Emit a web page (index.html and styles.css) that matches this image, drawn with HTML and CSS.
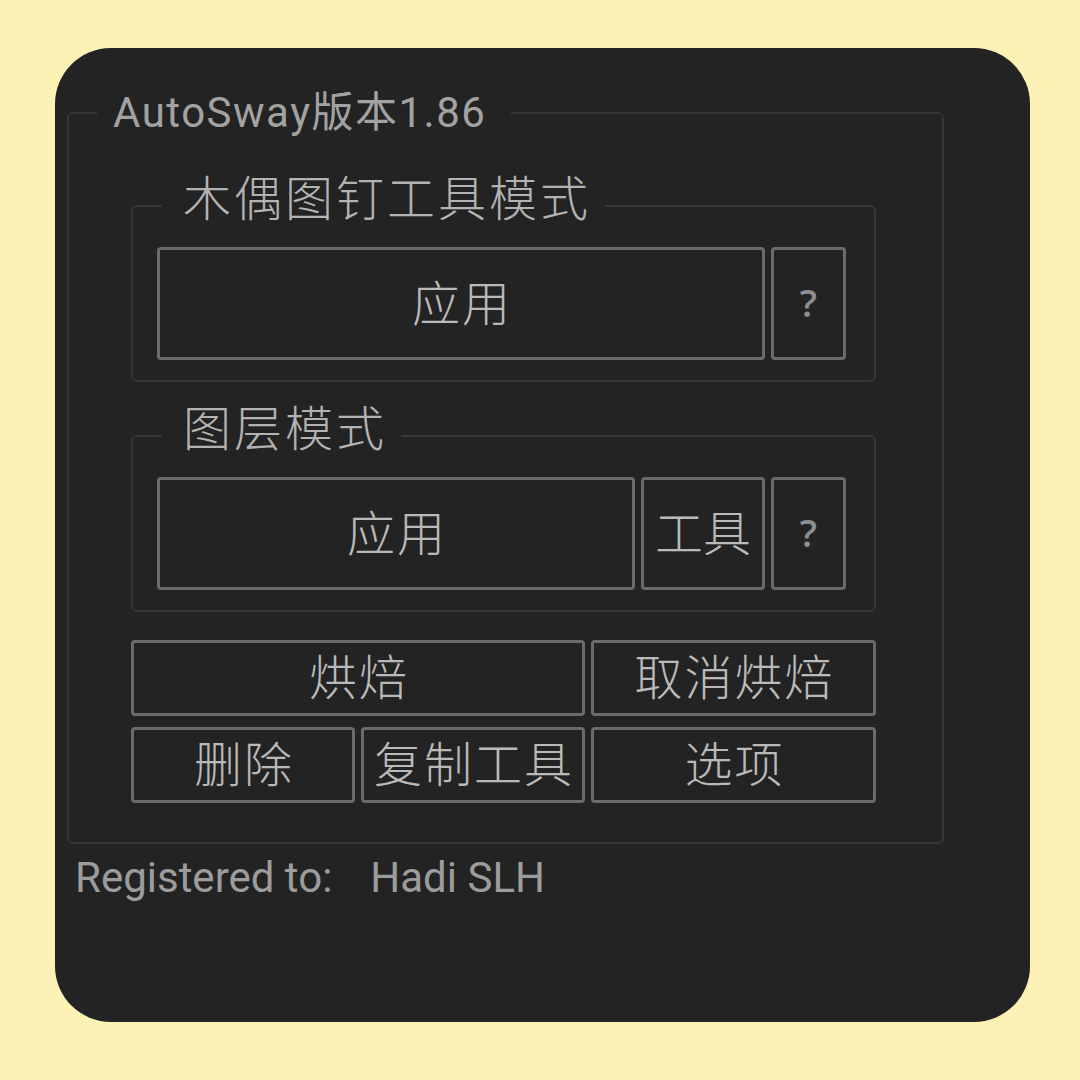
FILE: index.html
```html
<!DOCTYPE html>
<html lang="zh">
<head>
<meta charset="utf-8">
<title>AutoSway</title>
<link rel="stylesheet" href="styles.css">
</head>
<body>
<div class="panel">
  <fieldset class="outer">
    <legend class="outer-legend">AutoSway版本1.86</legend>
    <div class="outer-body">
      <fieldset class="group">
        <legend class="group-legend">木偶图钉工具模式</legend>
        <div class="btn-row">
          <button class="btn btn-grow">应用</button>
          <button class="btn btn-help">?</button>
        </div>
      </fieldset>
      <fieldset class="group group-second">
        <legend class="group-legend">图层模式</legend>
        <div class="btn-row">
          <button class="btn btn-grow">应用</button>
          <button class="btn btn-tool">工具</button>
          <button class="btn btn-help">?</button>
        </div>
      </fieldset>
      <div class="actions">
        <button class="btn btn-action span-2">烘焙</button>
        <button class="btn btn-action">取消烘焙</button>
        <button class="btn btn-action">删除</button>
        <button class="btn btn-action">复制工具</button>
        <button class="btn btn-action">选项</button>
      </div>
    </div>
  </fieldset>
  <div class="registered"><span>Registered to:</span><span class="reg-name">Hadi SLH</span></div>
</div>
</body>
</html>
```

FILE: styles.css
```css
html, body {
  margin: 0;
  padding: 0;
}
body {
  background: #fdf2b6;
  width: 1080px;
  height: 1080px;
  overflow: hidden;
}
.panel {
  box-sizing: border-box;
  margin: 48px 0 0 55px;
  width: 975px;
  height: 974px;
  border-radius: 56px;
  background: #232323;
  padding: 41px 0 0 12px;
}
.outer {
  box-sizing: border-box;
  width: 877px;
  margin: 0;
  padding: 0 32px 39px 28px;
  border: 2px solid #363636;
  border-radius: 6px;
  min-width: 0;
}
.outer-legend {
  padding: 0 25px 0 16px;
  font-family: Roboto, "Noto Sans CJK SC", sans-serif;
  font-size: 42px;
  line-height: 48px;
  color: #a2a2a2;
  letter-spacing: 1.5px;
}
.outer-body {
  padding: 30px 34px 0;
}
.group {
  box-sizing: border-box;
  width: 745px;
  margin: 0;
  padding: 2px 28px 20px 24px;
  border: 2px solid #363636;
  border-radius: 6px;
  min-width: 0;
}
.group-second {
  margin-top: 15px;
}
.group-legend {
  margin-left: 5px;
  padding: 0 14px 22px 21px;
  font-family: "Noto Sans CJK SC", sans-serif;
  font-weight: 300;
  font-size: 48px;
  line-height: 56px;
  letter-spacing: 3px;
  color: #b3b3b3;
}
.btn-row {
  display: flex;
  gap: 6px;
  height: 113px;
}
.btn {
  box-sizing: border-box;
  margin: 0;
  padding: 0 0 8px 2px;
  background: #232323;
  border: 3px solid #6b6b6b;
  border-radius: 4px;
  color: #bababa;
  font-family: "Noto Sans CJK SC", sans-serif;
  font-weight: 300;
  font-size: 48px;
  line-height: 1;
  letter-spacing: 2px;
  display: flex;
  align-items: center;
  justify-content: center;
}
.btn-grow {
  flex: 1;
}
.btn-tool {
  width: 124px;
  letter-spacing: 0;
  padding: 0 0 8px;
}
.btn-help {
  width: 75px;
  font-family: "Open Sans", sans-serif;
  font-size: 38px;
  font-weight: 600;
  color: #8b8e92;
  letter-spacing: 0;
  padding: 0 0 4px;
}
.actions {
  margin-top: 28px;
  display: grid;
  grid-template-columns: 224px 224px 285px;
  grid-auto-rows: 76px;
  column-gap: 6px;
  row-gap: 11px;
}
.span-2 {
  grid-column: span 2;
}
.registered {
  margin: 10px 0 0 8px;
  font-family: Roboto, sans-serif;
  font-size: 42px;
  line-height: 48px;
  color: #9c9c9c;
}
.reg-name {
  margin-left: 38px;
}
```
